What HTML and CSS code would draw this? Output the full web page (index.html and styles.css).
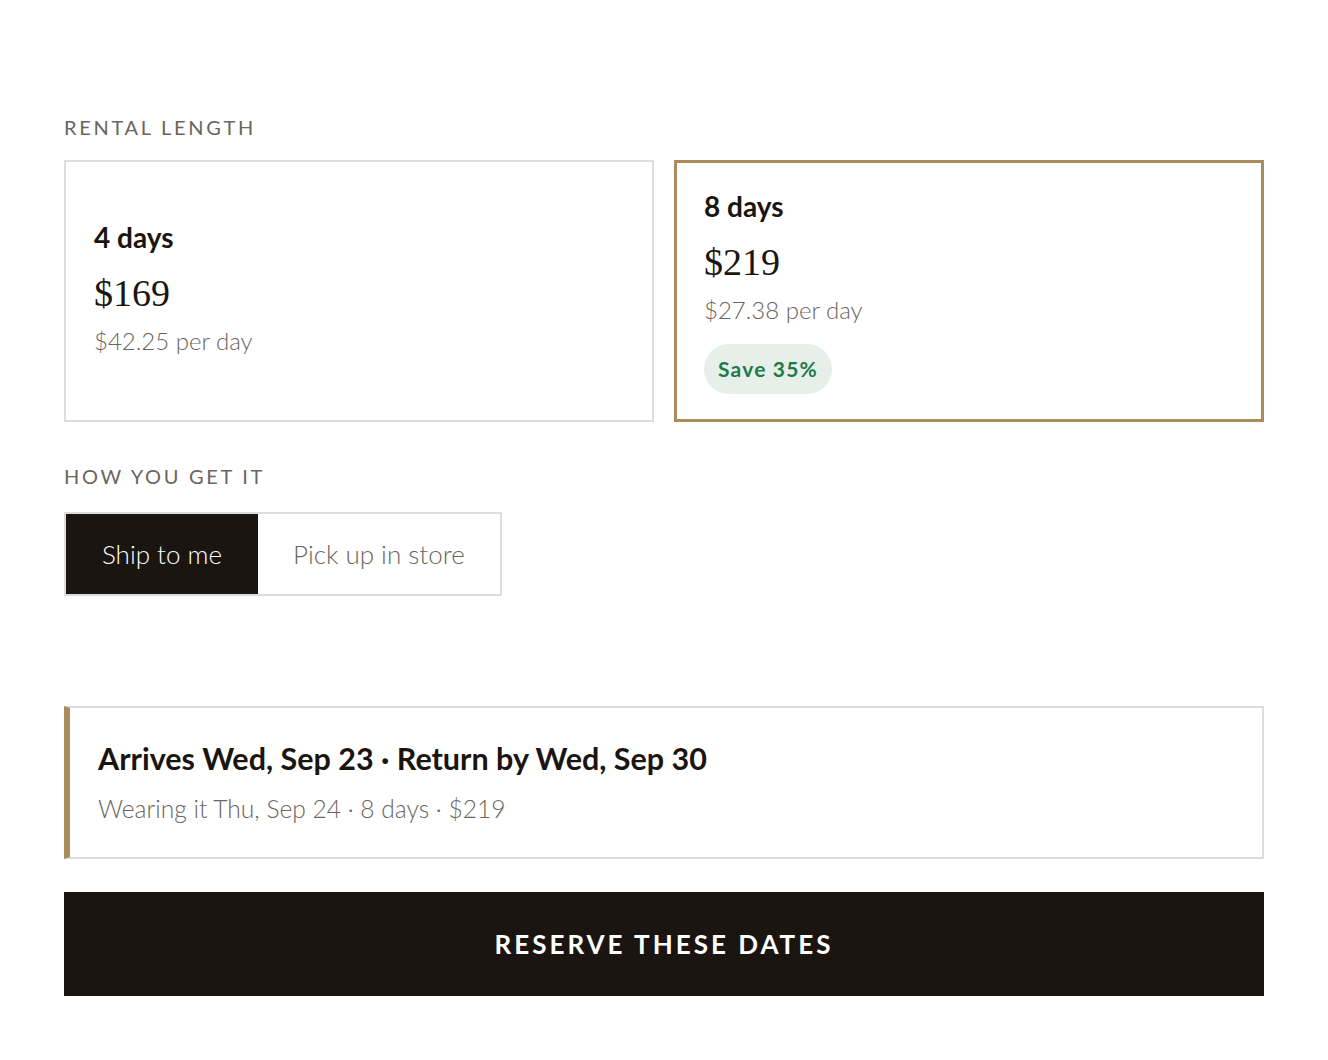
FILE: index.html
```html
<!DOCTYPE html>
<html lang="en">
<head>
  <meta charset="UTF-8">
  <meta name="viewport" content="width=device-width, initial-scale=1.0">
  <title>Reserve</title>
  <link rel="stylesheet" href="styles.css">
</head>
<body>
  <main class="booking">
    <!-- Rental length -->
    <h2 class="section-label">Rental length</h2>
    <div class="length-options">
      <div class="length-card">
        <div class="length-days">4 days</div>
        <div class="length-price">$169</div>
        <div class="length-per-day">$42.25 per day</div>
      </div>
      <div class="length-card selected">
        <div class="length-days">8 days</div>
        <div class="length-price">$219</div>
        <div class="length-per-day">$27.38 per day</div>
        <span class="save-badge">Save 35%</span>
      </div>
    </div>

    <!-- Delivery -->
    <h2 class="section-label second">How you get it</h2>
    <div class="delivery-toggle">
      <button class="toggle-btn active">Ship to me</button>
      <button class="toggle-btn">Pick up in store</button>
    </div>

    <!-- Summary -->
    <div class="summary">
      <div class="summary-title">Arrives Wed, Sep 23 · Return by Wed, Sep 30</div>
      <div class="summary-sub">Wearing it Thu, Sep 24 · 8 days · $219</div>
    </div>

    <button class="reserve-btn">Reserve these dates</button>
  </main>
</body>
</html>
```

FILE: styles.css
```css
body {
  margin: 0;
  padding: 0;
  background-color: #fff;
  font-family: Lato, "Open Sans", sans-serif;
  color: #1a1510;
}

.booking {
  padding: 115px 64px 40px;
  display: flex;
  flex-direction: column;
}

.section-label {
  margin: 0 0 21px;
  font-size: 20px;
  line-height: 24px;
  font-weight: 400;
  text-transform: uppercase;
  letter-spacing: 2.7px;
  color: #6b6560;
}

.section-label.second {
  margin-bottom: 24px;
}

.length-options {
  display: grid;
  grid-template-columns: 1fr 1fr;
  gap: 20px;
  margin-bottom: 42px;
}

.length-card {
  border: 2px solid #ddd;
  padding: 24px 28px 30px;
  display: flex;
  flex-direction: column;
  justify-content: center;
  align-items: flex-start;
}

.length-card.selected {
  border: 3px solid #a98b5c;
  padding: 26px 27px 25px;
}

.length-days {
  font-size: 28px;
  line-height: 34px;
  font-weight: 700;
  color: #1a1510;
}

.length-price {
  font-family: "Liberation Serif", serif;
  font-size: 38px;
  line-height: 60px;
  margin-top: 9px;
  color: #1a1510;
}

.length-per-day {
  margin-top: 3px;
  font-size: 24px;
  line-height: 30px;
  font-weight: 300;
  color: #6b6560;
}

.save-badge {
  margin-top: 19px;
  padding: 0 14px;
  height: 50px;
  line-height: 50px;
  border-radius: 25px;
  background-color: #e6efe9;
  color: #1f7a48;
  font-size: 21px;
  font-weight: 700;
  letter-spacing: 1.2px;
}

.delivery-toggle {
  display: flex;
  align-self: flex-start;
  border: 2px solid #ddd;
  margin-bottom: 110px;
}

.toggle-btn {
  font-family: inherit;
  font-size: 26px;
  font-weight: 300;
  height: 80px;
  border: none;
  background: #fff;
  color: #6b6560;
  padding: 0 35px;
  cursor: pointer;
}

.toggle-btn.active {
  background-color: #1a1510;
  color: #fff;
  padding: 0 36px;
}

.summary {
  border: 2px solid #ddd;
  border-left: 6px solid #a98b5c;
  padding: 30px 28px 32px;
  margin-bottom: 33px;
}

.summary-title {
  font-size: 30.5px;
  line-height: 40px;
  font-weight: 700;
  color: #1a1510;
}

.summary-sub {
  margin-top: 15px;
  font-size: 24.6px;
  line-height: 32px;
  font-weight: 300;
  color: #6b6560;
}

.reserve-btn {
  font-family: inherit;
  height: 104px;
  border: none;
  background-color: #1a1510;
  color: #fff;
  font-size: 26px;
  font-weight: 700;
  text-transform: uppercase;
  letter-spacing: 3px;
  cursor: pointer;
}
```
